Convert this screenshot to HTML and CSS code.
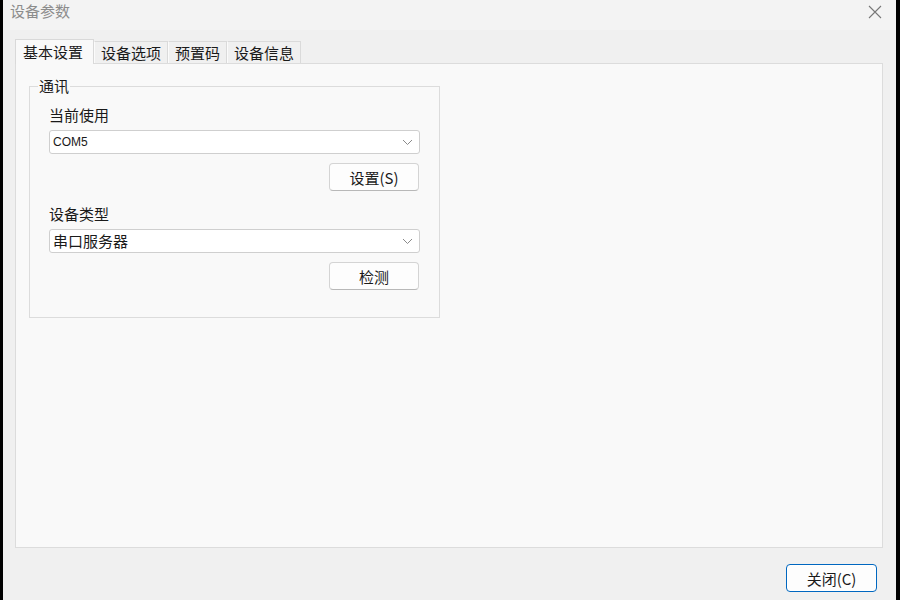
FILE: index.html
```html
<!DOCTYPE html>
<html lang="zh-CN">
<head>
    <meta charset="UTF-8">
    <title>设备参数</title>
    <link rel="stylesheet" href="styles.css">
</head>
<body>
    <div class="window">
        <div class="titlebar">
            <span class="title">设备参数</span>
            <button class="close-x" title="关闭">
                <svg width="14" height="14" viewBox="0 0 14 14"><path d="M1 1L13 13M13 1L1 13" stroke="#777" stroke-width="1.1" fill="none"/></svg>
            </button>
        </div>

        <div class="content">
            <div class="tabs">
                <div class="tab active">基本设置</div>
                <div class="tab">设备选项</div>
                <div class="tab">预置码</div>
                <div class="tab">设备信息</div>
            </div>

            <div class="panel">
                <fieldset class="group">
                    <legend>通讯</legend>

                    <div class="field-label">当前使用</div>
                    <div class="combo">
                        <span class="combo-text small">COM5</span>
                        <svg class="chevron" width="11" height="7" viewBox="0 0 11 7"><path d="M1 1L5.5 5.5L10 1" stroke="#8a8a8a" stroke-width="1" fill="none"/></svg>
                    </div>
                    <div class="btn-row first">
                        <button class="btn">设置(S)</button>
                    </div>

                    <div class="field-label second">设备类型</div>
                    <div class="combo">
                        <span class="combo-text">串口服务器</span>
                        <svg class="chevron" width="11" height="7" viewBox="0 0 11 7"><path d="M1 1L5.5 5.5L10 1" stroke="#8a8a8a" stroke-width="1" fill="none"/></svg>
                    </div>
                    <div class="btn-row">
                        <button class="btn">检测</button>
                    </div>
                </fieldset>
            </div>

            <div class="footer">
                <button class="btn primary">关闭(C)</button>
            </div>
        </div>
    </div>
</body>
</html>
```

FILE: styles.css
```css
body {
    margin: 0;
    padding: 0;
    background-color: #000;
    font-family: "Noto Sans CJK SC", "Noto Sans", sans-serif;
    font-size: 15px;
    color: #1a1a1a;
}

.window {
    margin-left: 3px;
    width: 893px;
    height: 600px;
    background-color: #f0f0f0;
    border-top-left-radius: 6px;
    display: flex;
    flex-direction: column;
}

.titlebar {
    height: 30px;
    background-color: #f3f3f3;
    display: flex;
    align-items: center;
    justify-content: space-between;
    padding-left: 7px;
    padding-right: 14px;
}

    .titlebar .title {
        color: #8c8c8c;
        font-size: 15px;
        line-height: 20px;
        margin-top: -8px;
    }

    .close-x {
        border: none;
        background: none;
        padding: 0;
        width: 14px;
        height: 14px;
        margin-top: -6px;
    }

        .close-x svg {
            display: block;
        }

.content {
    flex: 1;
    display: flex;
    flex-direction: column;
    padding: 9px 13px 0 12px;
}

.tabs {
    display: flex;
    align-items: flex-end;
    height: 24px;
}

.tab {
    height: 22px;
    line-height: 22px;
    padding: 0 6px;
    border: 1px solid #dadada;
    border-bottom: none;
    border-left-color: #fbfbfb;
    background-color: #f0f0f0;
    box-sizing: border-box;
}

    .tab.active {
        height: 25px;
        line-height: 23px;
        padding: 0 10px 0 7px;
        background-color: #f9f9f9;
        border-color: #d9d9d9;
        margin-bottom: -1px;
        position: relative;
        z-index: 1;
    }

.panel {
    height: 485px;
    box-sizing: border-box;
    background-color: #f9f9f9;
    border: 1px solid #dcdcdc;
    padding: 13px 0 0 13px;
}

.group {
    width: 411px;
    height: 241px;
    box-sizing: border-box;
    margin: 0;
    border: 1px solid #dcdcdc;
    padding: 0 19px;
}

    .group legend {
        padding: 0 1px;
        margin-left: -11px;
        line-height: 18px;
    }

.field-label {
    line-height: 20px;
    margin-top: 10px;
}

    .field-label.second {
        margin-top: 13px;
    }

.combo {
    margin-top: 5px;
    height: 24px;
    box-sizing: border-box;
    background-color: #fff;
    border: 1px solid #cfcfcf;
    border-radius: 3px;
    display: flex;
    align-items: center;
    justify-content: space-between;
    padding: 0 6px 0 3px;
}

.combo-text {
    line-height: 20px;
}

    .combo-text.small {
        font-family: "Liberation Sans", "DejaVu Sans", sans-serif;
        font-size: 12px;
    }

.btn-row {
    display: flex;
    justify-content: flex-end;
    padding-right: 1px;
    margin-top: 9px;
}

.btn {
    width: 90px;
    height: 28px;
    box-sizing: border-box;
    font-family: "Noto Sans CJK SC", "Noto Sans", sans-serif;
    font-size: 15px;
    color: #1a1a1a;
    background-color: #fdfdfd;
    border: 1px solid #d4d4d4;
    border-bottom-color: #b8b8b8;
    border-radius: 4px;
    padding: 0;
}

    .btn.primary {
        width: 91px;
        border: 1px solid #0067c0;
        box-shadow: inset 0 0 0 1px #fff;
    }

.footer {
    display: flex;
    justify-content: flex-end;
    padding-top: 16px;
    padding-right: 6px;
}
```
